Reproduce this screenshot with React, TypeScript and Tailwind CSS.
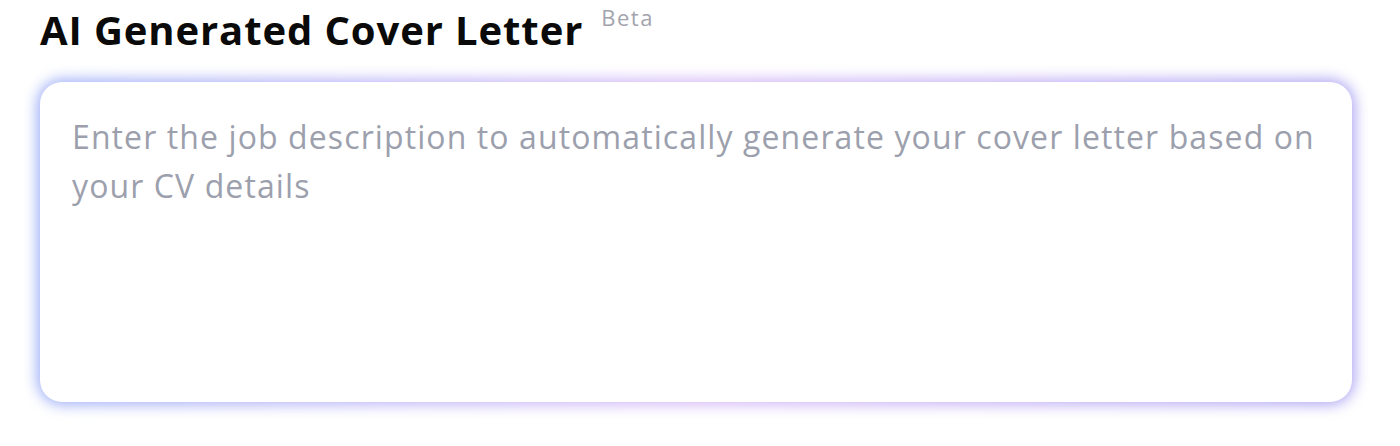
export default function App() {
  return (
    <div className="min-h-screen bg-white px-10 pt-[4px]">
      <div className="flex items-start gap-[18px]">
        <h1 className="text-[40px] leading-[52px] font-bold text-[#0a0a0a] tracking-[0.9px] [font-family:'Open_Sans',sans-serif]">
          AI Generated Cover Letter
        </h1>
        <span className="-mt-[1px] text-[22px] leading-[28px] tracking-[1.5px] text-[#a3a3ad] [font-family:'Open_Sans',sans-serif]">
          Beta
        </span>
      </div>
      <div className="relative mt-[26px] w-[1312px]">
        <div className="absolute -inset-[3px] rounded-[26px] bg-gradient-to-r from-[#9fb0f7] via-[#d6b9f7] to-[#aea6f3] blur-[7px]" />
        <textarea
          className="relative block h-[320px] w-full resize-none rounded-[22px] bg-white px-8 py-[30px] text-[32px] leading-[49px] tracking-[1.1px] text-[#374151] outline-none placeholder:text-[#9ca0ad] [font-family:'Open_Sans',sans-serif]"
          placeholder="Enter the job description to automatically generate your cover letter based on your CV details"
        />
      </div>
    </div>
  );
}
